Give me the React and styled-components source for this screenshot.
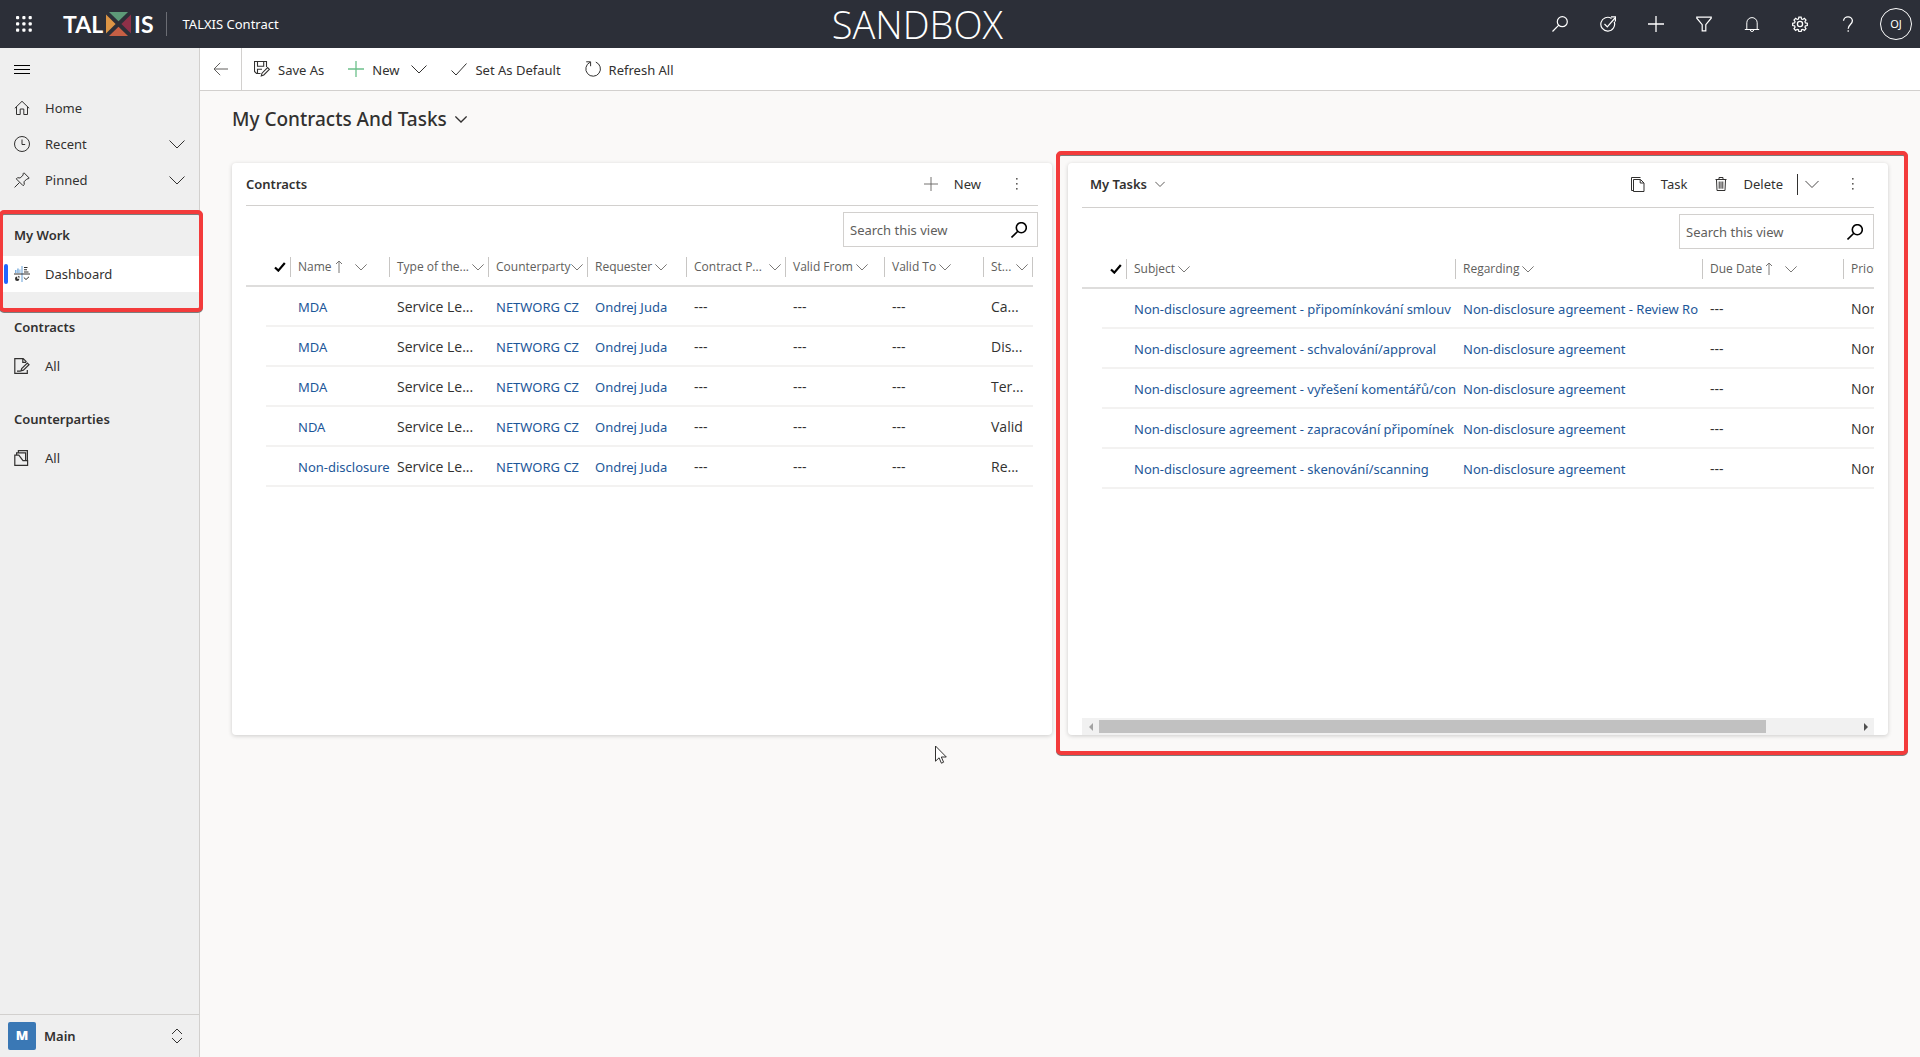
import React from "react";
import styled, { createGlobalStyle, css } from "styled-components";

const GlobalStyle = createGlobalStyle`
  *, *::before, *::after { box-sizing: border-box; }
  body {
    margin: 0;
    background: #faf9f8;
    color: #323130;
    font-family: "Noto Sans", "Open Sans", sans-serif;
    font-size: 13px;
    line-height: 20px;
  }
  button, input { font: inherit; color: inherit; }
  button { background: none; border: 0; padding: 0; cursor: pointer; }
  a { color: inherit; text-decoration: none; }
  ul { list-style: none; margin: 0; padding: 0; }
  svg { display: block; flex: none; }
`;

/* ---------- icons ---------- */

const Svg = styled.svg.attrs((p) => ({
  viewBox: p.viewBox || "0 0 16 16",
  "aria-hidden": true,
}))`
  width: ${(p) => p.$w || 16}px;
  height: ${(p) => p.$h || p.$w || 16}px;
  fill: none;
  stroke: ${(p) => p.$color || "currentColor"};
  stroke-width: ${(p) => p.$stroke || 1};
`;

const Chevron = ({ w = 16, color, stroke = 1 }) => (
  <Svg viewBox="0 0 16 16" $w={w} $stroke={stroke} $color={color}>
    <path d="M0.5 4.5 8 12 15.5 4.5" />
  </Svg>
);

const SearchIcon = ({ stroke = 1.2 }) => (
  <Svg $stroke={stroke}>
    <circle cx="10.3" cy="5.7" r="5" />
    <path d="M6.8 9.2.5 15.5" />
  </Svg>
);

const PlusIcon = ({ color }) => (
  <Svg $color={color} $stroke={1.3}>
    <path d="M8 0v16M0 8h16" />
  </Svg>
);

const ThinPlusIcon = () => (
  <Svg $w={14} $color="#605e5c">
    <path d="M8 0v16M0 8h16" />
  </Svg>
);

const MoreIcon = () => (
  <Svg>
    <g fill="#605e5c" stroke="none">
      <rect x="7" y="2" width="1.6" height="1.6" />
      <rect x="7" y="7" width="1.6" height="1.6" />
      <rect x="7" y="12" width="1.6" height="1.6" />
    </g>
  </Svg>
);

const UpArrow = () => (
  <Svg viewBox="0 0 8 14" $w={8} $h={14}>
    <path d="M4 1v12M1 4l3-3 3 3" />
  </Svg>
);

const CheckIcon = () => (
  <Svg>
    <path d="M.5 9.5 5 14 15.5 2.5" />
  </Svg>
);

const BoldCheck = () => (
  <Svg viewBox="0 0 12 10" $w={12} $h={10} $stroke={2.2}>
    <path d="M1 5.5 4.3 8.6 10.8 1" />
  </Svg>
);

const WaffleIcon = () => (
  <Svg>
    <g fill="currentColor" stroke="none">
      {[0, 6.3, 12.6].map((y) =>
        [0, 6.3, 12.6].map((x) => (
          <rect key={`${x}-${y}`} x={x} y={y} width="3.2" height="3.2" rx="1" />
        ))
      )}
    </g>
  </Svg>
);

const TargetIcon = () => (
  <Svg $stroke={1.2}>
    <path d="M14.2 5.8A6.9 6.9 0 1 1 11.5 2.4" />
    <path d="M4.5 8 7.3 10.8 15 2" />
    <path d="M11 .8h4.4v4.6" />
  </Svg>
);

const FunnelIcon = () => (
  <Svg $stroke={1.2}>
    <path d="M.8 1.2h14.4v1L9.8 8.6v6.2H6.2V8.6L.8 2.2z" />
  </Svg>
);

const BellIcon = () => (
  <Svg>
    <path d="M.8 13.5h14.4M2.8 13.5V6.8a5.2 5.2 0 0 1 10.4 0v6.7M6.3 13.8a1.7 1.7 0 0 0 3.4 0" />
  </Svg>
);

const GearIcon = () => (
  <Svg $stroke={1.3}>
    <path d="M6.8.8h2.4l.4 2 1.3.5 1.7-1.1 1.7 1.7-1.1 1.7.5 1.3 2 .4v2.4l-2 .4-.5 1.3 1.1 1.7-1.7 1.7-1.7-1.1-1.3.5-.4 2H6.8l-.4-2-1.3-.5-1.7 1.1-1.7-1.7 1.1-1.7-.5-1.3-2-.4V7.3l2-.4.5-1.3-1.1-1.7 1.7-1.7 1.7 1.1 1.3-.5z" transform="translate(.4 .3) scale(.95)" />
    <circle cx="8" cy="8" r="2.6" />
  </Svg>
);

const HelpIcon = () => (
  <Svg $stroke={1.3}>
    <path d="M3.5 4.8A4.4 4.4 0 0 1 8 .8a4.2 4.2 0 0 1 4.4 4c0 3.8-4.2 3.8-4.2 8M8.2 14.2v1.6" />
  </Svg>
);

const MenuIcon = () => (
  <Svg>
    <path d="M0 4.5h16M0 8.5h16M0 12.5h16" />
  </Svg>
);

const HomeIcon = () => (
  <Svg>
    <path d="M.8 8.3 8 1.3l7.2 7M2.5 6.8v7.7h3.7V9h3.6v5.5h3.7V6.8" />
  </Svg>
);

const ClockIcon = () => (
  <Svg>
    <circle cx="8" cy="8" r="7.5" />
    <path d="M8 3.5V8.5h3.2" />
  </Svg>
);

const PinIcon = () => (
  <Svg>
    <path d="M10 .8 15.2 6l-1 1-1.2-.2-3 3 .3 2.7-1.2 1.2-6.8-6.8 1.2-1.2 2.7.3 3-3L9 1.8zM5.5 10.5.6 15.4" />
  </Svg>
);

const DashboardIcon = () => (
  <Svg>
    <g stroke="none">
      <path fill="#7fb0de" d="M1 4h1.5v3H1zM3.2 2.5h1.5V7H3.2zM5.4 3.5h1V7h-1zM7.4 0h1.2v16H7.4z" />
      <path fill="#323130" d="M0 7.4h16v1.2H0zM10 1h3.5v1.1H10zM10 3.3h3v1h-3zM10 5.4h4.5v1H10z" />
      <path fill="#323130" d="M1 12.8a2.2 2.2 0 0 1 2.2-2.2v2.2h2.2A2.2 2.2 0 0 1 1 12.8zM4.2 9.8a2.2 2.2 0 0 1 1.7 1.7H4.2z" />
    </g>
    <path d="M9.8 11.5 12 13.5 15 10.8" />
  </Svg>
);

const ContractIcon = () => (
  <Svg $stroke={1.2}>
    <path d="M13.3 12v3.4H.8V.6h8.4l3.3 3.3M8.8.6v3.8h3.4" />
    <path d="m7 12.8.7-2.3 5.6-5.4 1.7 1.7-5.6 5.4zM3 13.2h3.6" />
  </Svg>
);

const FolderIcon = () => (
  <Svg $stroke={1.2}>
    <path d="M.8 5.2h4L9 10.6h4.6v4.8H.8zM2.6 5V2.8h9v7.6M4.4 2.6V.6h9v9.8" />
  </Svg>
);

const BackIcon = () => (
  <Svg>
    <path d="M15 8H1M7.2 1.8 1 8l6.2 6.2" />
  </Svg>
);

const SaveAsIcon = () => (
  <Svg $stroke={1.1}>
    <path d="M6.5 12.5H2.5l-2-2V.5h12v5.5M3.5.5v4.8h6.2V.5M3.5 12.5V8.2h4.5" />
    <path d="m7.3 14.9.7-2.7 5.6-5.6 1.8 1.8-5.6 5.6z" />
  </Svg>
);

const RefreshIcon = () => (
  <Svg>
    <path d="M10.8 1.1A7.3 7.3 0 1 1 5 1.3M1.2.8H5.6v4.4" />
  </Svg>
);

const CopyIcon = () => (
  <Svg viewBox="0 0 14 15" $w={14} $h={15}>
    <path d="M2.5 13.5H.5V.5h9M2.5 2.5h7l3.5 3.5v8.5H2.5zM9.2 2.5V6h3.6" />
  </Svg>
);

const TrashIcon = () => (
  <Svg viewBox="0 0 12 14" $w={12} $h={14}>
    <path d="M.5 2.5h11M4 2.2V.5h4v1.7M1.5 2.7l.5 10.8h8l.5-10.8M4.2 4.5v7.2M6 4.5v7.2M7.8 4.5v7.2" />
  </Svg>
);

const UpDownIcon = () => (
  <Svg>
    <path d="M3 6 8 1l5 5M3 10l5 5 5-5" />
  </Svg>
);

/* ---------- shell ---------- */

const Shell = styled.div`
  min-height: 100vh;
  display: grid;
  grid-template: 48px 1fr / 200px minmax(0, 1fr);
`;

const TopBar = styled.header`
  grid-column: 1 / -1;
  display: grid;
  grid-template-columns: auto 1fr auto;
  gap: 16px;
  align-items: center;
  background: #2c2f38;
  color: #fff;
`;

const TopGroup = styled.div`
  display: flex;
  align-items: center;
`;

const TopButton = styled.button`
  width: 48px;
  height: 48px;
  display: grid;
  place-items: center;
`;

const Logo = styled.a`
  display: flex;
  align-items: center;
  gap: 3px;
  margin-left: 15px;
  padding-right: 12px;
  border-right: 1px solid #6b6d74;
  font: 700 23px/20px Lato, sans-serif;
`;

const AppName = styled.a`
  margin-left: 16px;
`;

const EnvName = styled.div`
  padding-left: 20px;
  text-align: center;
  font-family: "Open Sans", sans-serif;
  font-size: 38px;
  font-weight: 300;
  line-height: 48px;
`;

const Avatar = styled.span`
  width: 32px;
  height: 32px;
  display: grid;
  place-items: center;
  border: 1px solid #fff;
  border-radius: 50%;
  font-size: 11px;
`;

/* ---------- site map ---------- */

const Sidebar = styled.nav`
  display: flex;
  flex-direction: column;
  background: #efefef;
  border-right: 1px solid #d2d0ce;
`;

const MenuButton = styled.button`
  height: 42px;
  padding: 0 14px;
  display: flex;
  align-items: center;
  color: #000;
`;

const NavList = styled.ul`
  margin-bottom: ${(p) => (p.$gap ? "12px" : 0)};
`;

const navRow = css`
  width: 100%;
  height: 36px;
  padding: 0 14px;
  display: flex;
  align-items: center;
  gap: 15px;
  text-align: left;
`;

const NavButton = styled.button`
  ${navRow}
  span { flex: 1; }
`;

const NavLink = styled.a`
  ${navRow}
  ${(p) =>
    p.$active &&
    css`
      padding-left: 4px;
      background: #fff;
      &::before {
        content: "";
        width: 4px;
        height: 20px;
        margin-right: -9px;
        border-radius: 2px;
        background: #2266ff;
      }
    `}
`;

const NavSections = styled.div`
  flex: 1;
  padding-top: 14px;
`;

const NavSection = styled.section`
  position: relative;
`;

const SectionTitle = styled.h2`
  height: 44px;
  margin: 0;
  padding: 13px 14px 0;
  font-size: 13px;
  font-weight: 600;
`;

const AreaButton = styled.button`
  height: 43px;
  padding: 0 14px 0 8px;
  display: flex;
  align-items: center;
  gap: 8px;
  border-top: 1px solid #d2d0ce;
  font-weight: 600;
  text-align: left;
  span { flex: 1; }
`;

const AreaTile = styled.b`
  width: 28px;
  height: 28px;
  border-radius: 2px;
  background: #3a78b5;
  color: #fff;
  text-align: center;
  line-height: 26px;
`;

/* ---------- main area ---------- */

const Main = styled.main`
  position: relative;
`;

const CommandBar = styled.div`
  height: 43px;
  display: flex;
  align-items: stretch;
  background: #fff;
  border-bottom: 1px solid #d2d0ce;
`;

const BackButton = styled.button`
  width: 42px;
  display: grid;
  place-items: center;
  border-right: 1px solid #d2d0ce;
  color: #605e5c;
`;

const Command = styled.button`
  padding: 0 12px;
  display: flex;
  align-items: center;
  gap: 8px;
  & > span { padding-top: 2px; }
  & > svg + span + svg { margin-left: 4px; }
`;

const PageTitle = styled.h1`
  margin: 0;
  padding: 14px 32px 30px;
  font-size: 19px;
  font-weight: 500;
  line-height: 28px;
`;

const TitleButton = styled.button`
  display: flex;
  align-items: center;
  gap: 8px;
`;

const Cards = styled.div`
  padding: 0 32px;
  display: grid;
  grid-template-columns: repeat(2, minmax(0, 1fr));
  gap: 16px;
`;

const Card = styled.section`
  position: relative;
  min-height: 572px;
  padding: 0 14px;
  display: flex;
  flex-direction: column;
  background: #fff;
  border-radius: 4px;
  box-shadow: 0 1px 4px rgba(0, 0, 0, 0.18);
`;

const CardHead = styled.div`
  min-height: ${(p) => (p.$tall ? 45 : 43)}px;
  padding: ${(p) => (p.$tall ? "0 13px 2px 8px" : "0 13px 0 0")};
  display: flex;
  align-items: center;
  border-bottom: 1px solid #d2d0ce;
`;

const CardTitle = styled.h2`
  flex: 1;
  margin: 0;
  font-size: 13px;
  font-weight: 600;
`;

const CardCommand = styled.button`
  margin-right: 28px;
  display: flex;
  align-items: center;
  gap: 16px;
`;

const SplitButton = styled.button`
  height: 21px;
  margin-left: -14px;
  margin-right: 26px;
  padding-left: 7px;
  display: flex;
  align-items: center;
  border-left: 1px solid #323130;
`;

const SearchBox = styled.label`
  width: 195px;
  height: 35px;
  margin-top: 6px;
  padding: 0 10px 0 6px;
  align-self: flex-end;
  display: flex;
  align-items: center;
  border: 1px solid #d2d0ce;
  color: #000;
`;

const SearchInput = styled.input`
  flex: 1;
  min-width: 0;
  padding: 0;
  border: 0;
  outline: 0;
  background: none;
  &::placeholder { color: #605e5c; opacity: 1; }
`;

const GridArea = styled.div`
  flex: 1;
  overflow: hidden;
`;

const Table = styled.table`
  width: ${(p) => p.$width};
  table-layout: fixed;
  border-spacing: 0;
`;

const Col = styled.col`
  width: ${(p) => (p.$w ? `${p.$w}px` : "auto")};
`;

const Th = styled.th`
  padding: 10px 0 8px;
  border-bottom: 2px solid #dedddc;
  color: #605e5c;
  font-family: "Open Sans", sans-serif;
  font-size: 12px;
  font-weight: 400;
  text-align: left;
`;

const HeadCell = styled.button`
  width: 100%;
  height: 20px;
  padding: 0 4px 0 ${(p) => (p.$check ? 8 : 7)}px;
  display: flex;
  align-items: center;
  justify-content: ${(p) => (p.$spread ? "space-between" : "flex-start")};
  gap: ${(p) => (p.$spread ? 0 : 3)}px;
  border-right: 1px solid #c8c6c4;
  white-space: nowrap;
  color: ${(p) => (p.$check ? "#000" : "inherit")};
  & > svg { opacity: ${(p) => (p.$check ? 1 : 0.85)}; }
  & > svg + svg { margin-left: 9px; }
`;

const Td = styled.td`
  height: 40px;
  padding: 2px 0 0 ${(p) => (p.$blank ? 0 : 7)}px;
  overflow: hidden;
  white-space: nowrap;
  border-bottom: ${(p) => (p.$blank ? 0 : "2px solid #f3f2f1")};
`;

const CellText = styled.span`
  font-family: "Open Sans", sans-serif;
  font-size: 14px;
`;

const RecordLink = styled.a`
  color: #1d5799;
`;

const ScrollBar = styled.div`
  height: 17px;
  display: grid;
  grid-template-columns: 17px 1fr 17px;
  align-items: center;
  background: #f1f1f1;
`;

const ScrollArrow = styled.button`
  height: 17px;
  display: grid;
  place-items: center;
  color: ${(p) => (p.$dim ? "#a3a3a3" : "#505050")};
`;

const ScrollThumb = styled.div`
  width: 88%;
  height: 13px;
  background: #c1c1c1;
`;

/* ---------- markers and pointer ---------- */

const Marker = styled.div`
  position: absolute;
  inset: ${(p) => p.$inset};
  z-index: 2;
  border: 4px solid #f33b3b;
  border-radius: 5px;
  filter: drop-shadow(0 1px 0 #7d7d7d);
  pointer-events: none;
`;

const Pointer = styled.div`
  position: absolute;
  top: 697px;
  left: 735px;
  z-index: 3;
`;

/* ---------- data ---------- */

const contractColumns = [
  { label: "Name", sorted: true },
  { label: "Type of the...", spread: true },
  { label: "Counterparty", spread: true },
  { label: "Requester" },
  { label: "Contract P...", spread: true },
  { label: "Valid From" },
  { label: "Valid To" },
  { label: "St...", width: 49, spread: true },
];

const contractRows = [
  ["MDA", "Ca..."],
  ["MDA", "Dis..."],
  ["MDA", "Ter..."],
  ["NDA", "Valid"],
  ["Non-disclosure", "Re..."],
].map(([name, status]) => [
  { href: "#contract", text: name },
  { text: "Service Le..." },
  { href: "#account", text: "NETWORG CZ" },
  { href: "#user", text: "Ondrej Juda" },
  { text: "---" },
  { text: "---" },
  { text: "---" },
  { text: status },
]);

const taskColumns = [
  { label: "Subject", width: 329 },
  { label: "Regarding", width: 247 },
  { label: "Due Date", width: 141, sorted: true },
  { label: "Priority", width: 141 },
];

const taskRows = [
  ["připomínkování smlouv", "Non-disclosure agreement - Review Ro"],
  ["schvalování/approval", "Non-disclosure agreement"],
  ["vyřešení komentářů/con", "Non-disclosure agreement"],
  ["zapracování připomínek", "Non-disclosure agreement"],
  ["skenování/scanning", "Non-disclosure agreement"],
].map(([step, regarding]) => [
  { href: "#task", text: `Non-disclosure agreement - ${step}` },
  { href: "#contract", text: regarding },
  { text: "---" },
  { text: "Normal" },
]);

/* ---------- parts ---------- */

function RecordGrid({ columns, rows, width }) {
  return (
    <GridArea>
      <Table $width={width}>
        <colgroup>
          <Col $w={20} />
          <Col $w={25} />
          {columns.map((c) => (
            <Col key={c.label} $w={c.width} />
          ))}
        </colgroup>
        <thead>
          <tr>
            <Th />
            <Th>
              <HeadCell $check aria-label="Select all">
                <BoldCheck />
              </HeadCell>
            </Th>
            {columns.map((c) => (
              <Th key={c.label}>
                <HeadCell $spread={c.spread}>
                  <span>{c.label}</span>
                  {c.sorted && <UpArrow />}
                  <Chevron w={12} stroke={1.3} />
                </HeadCell>
              </Th>
            ))}
          </tr>
        </thead>
        <tbody>
          {rows.map((cells, r) => (
            <tr key={r}>
              <Td $blank />
              <Td />
              {cells.map((cell, i) => (
                <Td key={i}>
                  {cell.href ? (
                    <RecordLink href={cell.href}>{cell.text}</RecordLink>
                  ) : (
                    <CellText>{cell.text}</CellText>
                  )}
                </Td>
              ))}
            </tr>
          ))}
        </tbody>
      </Table>
    </GridArea>
  );
}

function ViewSearch({ id }) {
  return (
    <SearchBox htmlFor={id}>
      <SearchInput id={id} type="text" placeholder="Search this view" aria-label="Search this view" />
      <SearchIcon stroke={1.6} />
    </SearchBox>
  );
}

const topActions = [
  ["Search", SearchIcon],
  ["Tasks", TargetIcon],
  ["Add", PlusIcon],
  ["Filter", FunnelIcon],
  ["Notifications", BellIcon],
  ["Settings", GearIcon],
  ["Help", HelpIcon],
];

export default function App() {
  return (
    <>
      <GlobalStyle />
      <Shell>
        <TopBar>
          <TopGroup>
            <TopButton aria-label="App launcher">
              <WaffleIcon />
            </TopButton>
            <Logo href="#home">
              <span>TAL</span>
              <Svg viewBox="0 0 25 24" $w={25} $h={24}>
                <g stroke="none">
                  <path fill="#5d9a78" d="M3 0h19l-9.5 9.3z" />
                  <path fill="#dc9545" d="M0 2.5 9.6 12 0 21.5z" />
                  <path fill="#8e3048" d="M25 2.5 15.4 12l9.6 9.5z" />
                  <path fill="#c65f44" d="M3 24h19l-9.5-9.3z" />
                </g>
              </Svg>
              <span>IS</span>
            </Logo>
            <AppName href="#app">TALXIS Contract</AppName>
          </TopGroup>
          <EnvName>SANDBOX</EnvName>
          <TopGroup>
            {topActions.map(([label, Icon]) => (
              <TopButton key={label} aria-label={label}>
                <Icon />
              </TopButton>
            ))}
            <TopButton aria-label="Account">
              <Avatar>OJ</Avatar>
            </TopButton>
          </TopGroup>
        </TopBar>

        <Sidebar>
          <MenuButton aria-label="Collapse menu">
            <MenuIcon />
          </MenuButton>
          <NavList>
            <li>
              <NavLink href="#home">
                <HomeIcon />
                Home
              </NavLink>
            </li>
            <li>
              <NavButton>
                <ClockIcon />
                <span>Recent</span>
                <Chevron />
              </NavButton>
            </li>
            <li>
              <NavButton>
                <PinIcon />
                <span>Pinned</span>
                <Chevron />
              </NavButton>
            </li>
          </NavList>
          <NavSections>
            <NavSection>
              <SectionTitle>My Work</SectionTitle>
              <NavList $gap>
                <li>
                  <NavLink href="#dashboard" $active>
                    <DashboardIcon />
                    Dashboard
                  </NavLink>
                </li>
              </NavList>
              <Marker $inset="-2px -4px -20px -1px" />
            </NavSection>
            <NavSection>
              <SectionTitle>Contracts</SectionTitle>
              <NavList $gap>
                <li>
                  <NavLink href="#contracts">
                    <ContractIcon />
                    All
                  </NavLink>
                </li>
              </NavList>
            </NavSection>
            <NavSection>
              <SectionTitle>Counterparties</SectionTitle>
              <NavList $gap>
                <li>
                  <NavLink href="#counterparties">
                    <FolderIcon />
                    All
                  </NavLink>
                </li>
              </NavList>
            </NavSection>
          </NavSections>
          <AreaButton>
            <AreaTile>M</AreaTile>
            <span>Main</span>
            <UpDownIcon />
          </AreaButton>
        </Sidebar>

        <Main>
          <CommandBar>
            <BackButton aria-label="Back">
              <BackIcon />
            </BackButton>
            <Command>
              <SaveAsIcon />
              <span>Save As</span>
            </Command>
            <Command>
              <PlusIcon color="#6cc08b" />
              <span>New</span>
              <Chevron />
            </Command>
            <Command>
              <CheckIcon />
              <span>Set As Default</span>
            </Command>
            <Command>
              <RefreshIcon />
              <span>Refresh All</span>
            </Command>
          </CommandBar>

          <PageTitle>
            <TitleButton>
              My Contracts And Tasks
              <Chevron w={12} stroke={1.8} />
            </TitleButton>
          </PageTitle>

          <Cards>
            <Card>
              <CardHead>
                <CardTitle>Contracts</CardTitle>
                <CardCommand>
                  <ThinPlusIcon />
                  New
                </CardCommand>
                <button aria-label="More commands">
                  <MoreIcon />
                </button>
              </CardHead>
              <ViewSearch id="search-contracts" />
              <RecordGrid columns={contractColumns} rows={contractRows} width="calc(100% - 5px)" />
            </Card>

            <Card>
              <CardHead $tall>
                <CardTitle>
                  <TitleButton>
                    My Tasks
                    <Chevron w={10} stroke={1.6} color="#605e5c" />
                  </TitleButton>
                </CardTitle>
                <CardCommand>
                  <CopyIcon />
                  Task
                </CardCommand>
                <CardCommand>
                  <TrashIcon />
                  Delete
                </CardCommand>
                <SplitButton aria-label="More delete options">
                  <Chevron w={14} />
                </SplitButton>
                <button aria-label="More commands">
                  <MoreIcon />
                </button>
              </CardHead>
              <ViewSearch id="search-tasks" />
              <RecordGrid columns={taskColumns} rows={taskRows} width="903px" />
              <ScrollBar>
                <ScrollArrow $dim aria-label="Scroll left">
                  <Svg viewBox="0 0 4 8" $w={4} $h={8}>
                    <path fill="currentColor" stroke="none" d="M4 0v8L0 4z" />
                  </Svg>
                </ScrollArrow>
                <ScrollThumb />
                <ScrollArrow aria-label="Scroll right">
                  <Svg viewBox="0 0 4 8" $w={4} $h={8}>
                    <path fill="currentColor" stroke="none" d="M0 0v8l4-4z" />
                  </Svg>
                </ScrollArrow>
              </ScrollBar>
              <Marker $inset="-12px -20px -20px -12px" />
            </Card>
          </Cards>

          <Pointer>
            <Svg viewBox="0 0 12 19" $w={12} $h={19}>
              <path fill="#fff" d="M.5 1v15.2l3.6-3.4 2.3 5.4 2.2-1-2.3-5.2h5z" />
            </Svg>
          </Pointer>
        </Main>
      </Shell>
    </>
  );
}
